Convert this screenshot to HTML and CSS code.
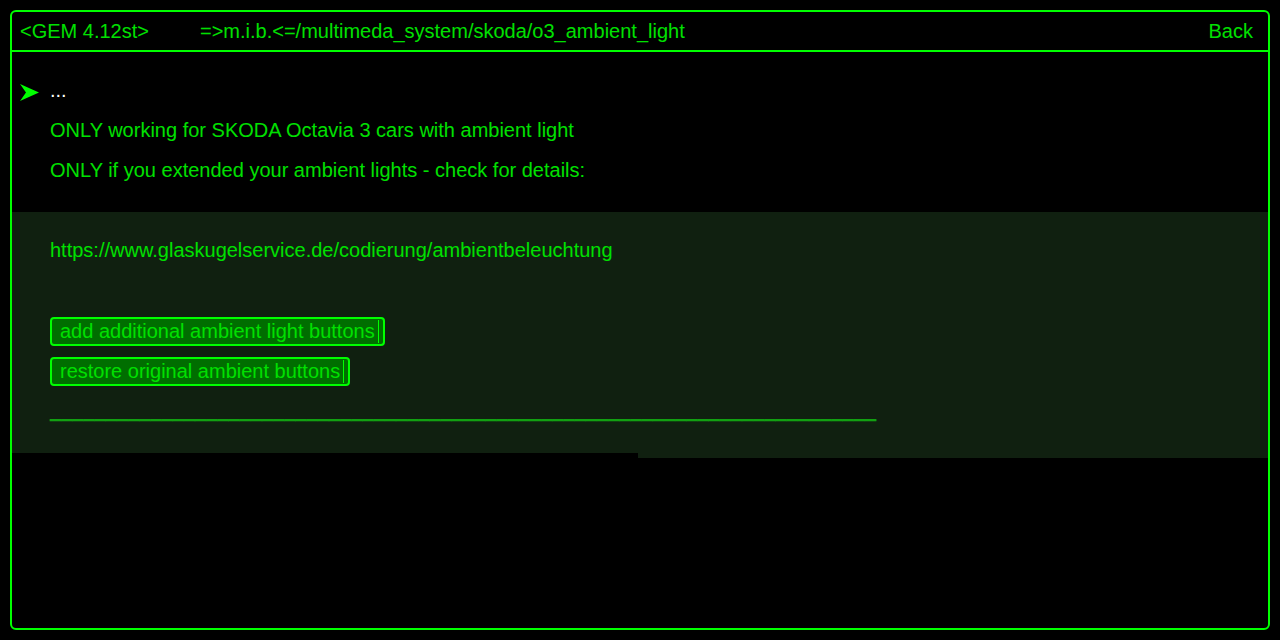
FILE: index.html
```html
<!DOCTYPE html>
<html>
<head>
<meta charset="utf-8">
<link rel="stylesheet" href="styles.css">
</head>
<body>
<div class="frame">
  <div class="header">
    <span class="gem">&lt;GEM 4.12st&gt;</span>
    <span class="path">=&gt;m.i.b.&lt;=/multimeda_system/skoda/o3_ambient_light</span>
    <span class="back">Back</span>
  </div>
  <div class="content">
    <div class="row first">
      <svg class="arrow" width="20" height="18" viewBox="0 0 20 18"><polygon points="0,0 19,8.5 0,17 6,8.5" fill="#00ff00"/></svg>
      <span class="white">...</span>
    </div>
    <div class="row">ONLY working for SKODA Octavia 3 cars with ambient light</div>
    <div class="row">ONLY if you extended your ambient lights - check for details:</div>
  </div>
  <div class="panel">
    <div class="row">https://www.glaskugelservice.de/codierung/ambientbeleuchtung</div>
    <div class="row spacer"></div>
    <div class="row"><span class="btn"><span class="btn-label">add additional ambient light buttons</span></span></div>
    <div class="row"><span class="btn"><span class="btn-label">restore original ambient buttons</span></span></div>
    <div class="row rule">__________________________________________________________________________</div>
  </div>
  <div class="panel-tail"></div>
</div>
</body>
</html>
```
FILE: styles.css
```css
html, body {
  margin: 0;
  padding: 0;
  background: #000;
}
body {
  font-family: "Liberation Sans", Arial, sans-serif;
  font-size: 20px;
  color: #00e000;
}
.frame {
  margin: 10px;
  height: 620px;
  box-sizing: border-box;
  border: 2px solid #00ff00;
  border-radius: 6px;
}
.header {
  height: 38px;
  border-bottom: 2px solid #00ff00;
  display: flex;
  align-items: center;
  padding: 0 15px 0 8px;
  line-height: 38px;
}
.gem {
  width: 180px;
}
.path {
  flex: 1;
}
.content {
  padding-top: 18px;
  padding-bottom: 22px;
}
.row {
  height: 40px;
  line-height: 40px;
  padding-left: 38px;
  display: flex;
  align-items: center;
  white-space: nowrap;
}
.row.first {
  padding-left: 8px;
}
.row.spacer {
  height: 41px;
}
.arrow {
  margin-right: 10px;
  margin-top: 6px;
}
.white {
  color: #ffffff;
}
.panel {
  background: #102010;
  padding-top: 18px;
  padding-bottom: 23px;
}
.panel-tail {
  height: 5px;
  margin-left: 626px;
  background: #102010;
}
.btn {
  display: inline-flex;
  align-items: center;
  height: 29px;
  box-sizing: border-box;
  border: 2px solid #00ff00;
  border-radius: 4px;
  background: #006e00;
  padding: 0 4px 0 8px;
  line-height: 23px;
}
.btn-label {
  border-right: 1px solid #00ff00;
  padding-right: 3px;
  height: 23px;
}
.rule {
  margin-top: -1px;
  color: #12a012;
  letter-spacing: 0.04px;
  text-shadow: 0 -1px 0 #12a012;
}
```
